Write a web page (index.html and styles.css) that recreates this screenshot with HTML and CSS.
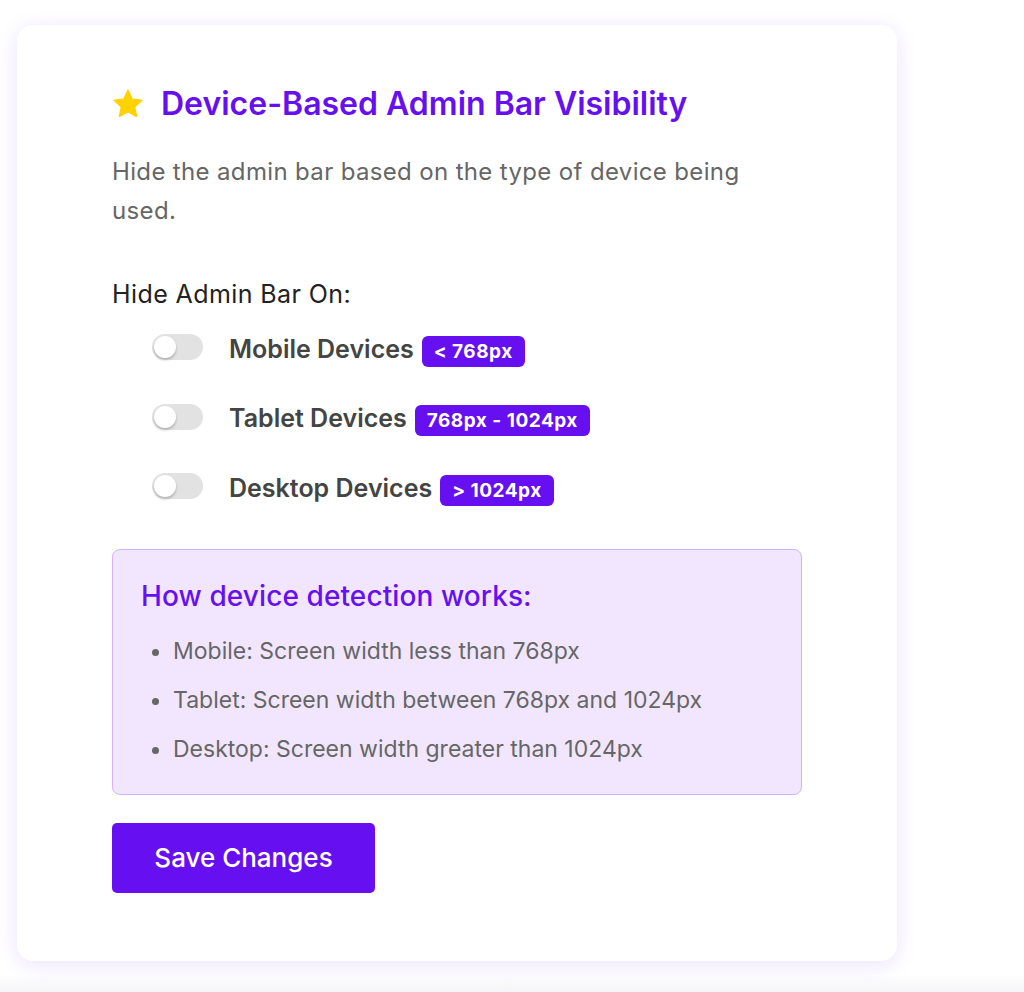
FILE: index.html
```html
<!DOCTYPE html>
<html lang="en">
<head>
<meta charset="utf-8">
<title>Device-Based Admin Bar Visibility</title>
<link rel="stylesheet" href="styles.css">
</head>
<body>
<div class="page">
  <section class="card">
    <h2 class="title">
      <svg class="star" viewBox="0 0 24 24" width="30" height="30" aria-hidden="true">
        <path d="M12 1.8l3.05 6.6 7.2.85-5.32 4.93 1.42 7.12L12 17.7l-6.35 3.6 1.42-7.12L1.75 9.25l7.2-.85z" fill="#ffd200" stroke="#ffd200" stroke-width="1.2" stroke-linejoin="round"/>
      </svg>
      <span>Device-Based Admin Bar Visibility</span>
    </h2>
    <p class="desc">Hide the admin bar based on the type of device being used.</p>

    <div class="field-label">Hide Admin Bar On:</div>
    <div class="options">
      <label class="option">
        <span class="toggle"><span class="knob"></span></span>
        <span class="opt-text">Mobile Devices</span>
        <span class="badge">&lt; 768px</span>
      </label>
      <label class="option">
        <span class="toggle"><span class="knob"></span></span>
        <span class="opt-text">Tablet Devices</span>
        <span class="badge">768px - 1024px</span>
      </label>
      <label class="option">
        <span class="toggle"><span class="knob"></span></span>
        <span class="opt-text">Desktop Devices</span>
        <span class="badge">&gt; 1024px</span>
      </label>
    </div>

    <div class="info">
      <h3 class="info-title">How device detection works:</h3>
      <ul class="info-list">
        <li>Mobile: Screen width less than 768px</li>
        <li>Tablet: Screen width between 768px and 1024px</li>
        <li>Desktop: Screen width greater than 1024px</li>
      </ul>
    </div>

    <button class="save" type="button">Save Changes</button>
  </section>
</div>
</body>
</html>
```

FILE: styles.css
```css
* { box-sizing: border-box; }

html, body {
  margin: 0;
  padding: 0;
  background: #ffffff;
}

body {
  font-family: Inter, "Noto Sans", "Liberation Sans", sans-serif;
  color: #1d2327;
}

.page {
  padding: 25px 0 0 17px;
  min-height: 992px;
  background: linear-gradient(to bottom, #ffffff 0, #ffffff 975px, #f4f4f6 992px);
}

.card {
  width: 880px;
  height: 936px;
  background: #ffffff;
  border-radius: 16px;
  box-shadow: 0 4px 22px rgba(120, 60, 245, 0.14);
  padding: 60px 95px 68px 95px;
}

.title {
  display: flex;
  align-items: center;
  gap: 17px;
  margin: 0;
  font-size: 32px;
  line-height: 38px;
  font-weight: 600;
  color: #6610f2;
  letter-spacing: 0;
}

.star {
  flex: none;
  width: 32px;
  height: 32px;
}

.desc {
  margin: 29px 0 0 0;
  max-width: 650px;
  font-size: 24px;
  line-height: 39px;
  color: #666666;
  letter-spacing: 0.35px;
}

.field-label {
  margin-top: 49px;
  font-size: 25px;
  line-height: 30px;
  color: #222222;
  letter-spacing: 0.4px;
}

.options {
  display: flex;
  flex-direction: column;
  padding-left: 40px;
  margin-top: 5px;
}

.option {
  display: flex;
  align-items: center;
  height: 69.5px;
}

.toggle {
  position: relative;
  flex: none;
  width: 51px;
  height: 26px;
  border-radius: 13px;
  background: #e2e2e2;
  margin-right: 26px;
  margin-top: -3px;
}

.knob {
  position: absolute;
  left: 2px;
  top: 2px;
  width: 22px;
  height: 22px;
  border-radius: 50%;
  background: #ffffff;
  box-shadow: 0 2px 3px rgba(0, 0, 0, 0.22);
}

.opt-text {
  font-size: 25px;
  font-weight: 600;
  color: #444444;
  margin-right: 8px;
}

.badge {
  display: inline-flex;
  align-items: center;
  height: 31px;
  padding: 0 12px;
  border-radius: 6px;
  background: #6610f2;
  color: #ffffff;
  font-size: 19px;
  font-weight: 700;
  letter-spacing: 0.5px;
  margin-top: 5px;
}

.info {
  margin-top: 26px;
  width: 690px;
  height: 246px;
  background: #f2e6fe;
  border: 1px solid #d3b0fc;
  border-radius: 8px;
  padding: 29px 28px 0 28px;
}

.info-title {
  margin: 0;
  font-size: 28px;
  line-height: 34px;
  font-weight: 500;
  color: #6610f2;
  letter-spacing: 0.1px;
}

.info-list {
  margin: 23px 0 0 0;
  padding-left: 32px;
  font-size: 23px;
  line-height: 30px;
  color: #666666;
}

.info-list li {
  margin-bottom: 19px;
}

.save {
  display: block;
  margin-top: 28px;
  width: 263px;
  height: 70px;
  border: none;
  border-radius: 5px;
  background: #6610f2;
  color: #ffffff;
  font-family: inherit;
  font-size: 26px;
  font-weight: 500;
  cursor: pointer;
}
```
